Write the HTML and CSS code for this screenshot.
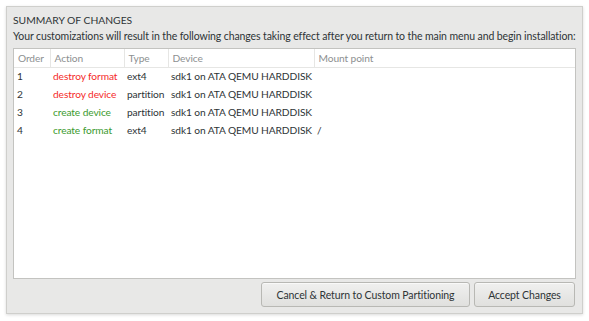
FILE: index.html
```html
<!DOCTYPE html>
<html lang="en">
    <head>
        <title>Summary of Changes</title>
        <meta charset="UTF-8">
        <link rel="stylesheet" href="styles.css">
    </head>
<body>
    <div class="dialog">
        <div class="title">SUMMARY OF CHANGES</div>
        <div class="intro">Your customizations will result in the following changes taking effect after you return to the main menu and begin installation:</div>

        <div class="changes">
            <table>
                <colgroup>
                    <col class="c_order">
                    <col class="c_action">
                    <col class="c_type">
                    <col class="c_device">
                    <col>
                </colgroup>
                <thead>
                    <tr>
                        <th>Order</th>
                        <th>Action</th>
                        <th>Type</th>
                        <th>Device</th>
                        <th>Mount point</th>
                    </tr>
                </thead>
                <tbody>
                    <tr>
                        <td>1</td>
                        <td class="destroy">destroy format</td>
                        <td>ext4</td>
                        <td>sdk1 on ATA QEMU HARDDISK</td>
                        <td></td>
                    </tr>
                    <tr>
                        <td>2</td>
                        <td class="destroy">destroy device</td>
                        <td>partition</td>
                        <td>sdk1 on ATA QEMU HARDDISK</td>
                        <td></td>
                    </tr>
                    <tr>
                        <td>3</td>
                        <td class="create">create device</td>
                        <td>partition</td>
                        <td>sdk1 on ATA QEMU HARDDISK</td>
                        <td></td>
                    </tr>
                    <tr>
                        <td>4</td>
                        <td class="create">create format</td>
                        <td>ext4</td>
                        <td>sdk1 on ATA QEMU HARDDISK</td>
                        <td>/</td>
                    </tr>
                </tbody>
            </table>
        </div>

        <div class="buttons">
            <button>Cancel &amp; Return to Custom Partitioning</button>
            <button>Accept Changes</button>
        </div>
    </div>
</body>
</html>
```

FILE: styles.css
```css
body {
    font-family: Lato, 'Noto Sans', sans-serif;
    font-size: 10.5px;
    letter-spacing: -0.1px;
    margin: 0;
    padding: 0;
    background-color: #ffffff;
    color: #2e3436;
}

* {
    box-sizing: border-box;
}

.dialog {
    margin: 6px;
    width: 577px;
    height: 308px;
    padding: 5px 6px 6px 6px;
    background-color: #e8e8e7;
    border: 1px solid #cfcfcc;
    box-shadow: 0px 1px 3px rgba(0, 0, 0, 0.15);
    display: flex;
    flex-direction: column;
}

.title {
    font-size: 10.3px;
    line-height: 14px;
    margin-top: 1px;
    letter-spacing: 0;
}

.intro {
    margin-top: 2px;
    line-height: 14px;
    white-space: nowrap;
}

.changes {
    margin-top: 5px;
    flex: 1;
    background-color: #ffffff;
    border: 1px solid #c3c3c0;
}

table {
    width: 100%;
    font-size: 10.2px;
    border-collapse: collapse;
    table-layout: fixed;
}

.c_order { width: 36px; }
.c_action { width: 74px; }
.c_type { width: 44px; }
.c_device { width: 146px; }

th {
    text-align: left;
    font-weight: normal;
    color: #8d9091;
    height: 18px;
    padding: 0 4px;
    border-right: 1px solid #e6e6e4;
    border-bottom: 1px solid #e6e6e4;
}

th:last-child {
    border-right: none;
}

td {
    height: 18px;
    padding: 0 3px;
    white-space: nowrap;
    overflow: hidden;
}

.destroy {
    color: #f52a2a;
}

.create {
    color: #3b9a2e;
}

.buttons {
    margin-top: 3px;
    display: flex;
    justify-content: flex-end;
    gap: 4px;
    padding-right: 1px;
}

button {
    font-family: Lato, 'Noto Sans', sans-serif;
    font-size: 10.5px;
    letter-spacing: -0.1px;
    white-space: nowrap;
    color: #2e3436;
    height: 25px;
    padding: 0 8px;
    border: 1px solid #b8b8b4;
    border-radius: 3px;
    background: linear-gradient(to bottom, #f0f0ef, #e0e0de);
    box-shadow: 0px 1px 0px rgba(255, 255, 255, 0.6) inset;
}

.buttons button:first-child {
    width: 209px;
}

.buttons button:last-child {
    width: 101px;
}
```
